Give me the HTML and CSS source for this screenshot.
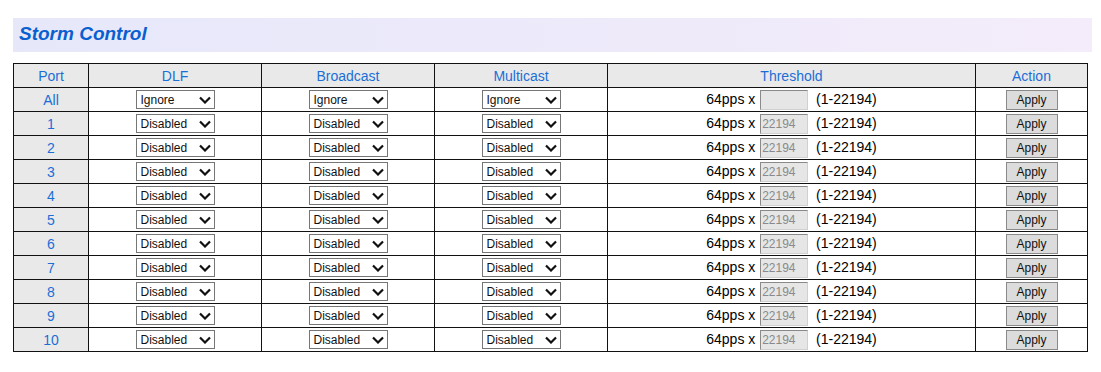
FILE: index.html
```html
<!DOCTYPE html>
<html>
<head>
  <title>Storm Control</title>
  <link rel="stylesheet" href="styles.css">
</head>
<body>
  <div class="page">
    <div class="title-bar">Storm Control</div>
    <table class="storm">
      <tr>
        <th class="col-port">Port</th>
        <th class="col-sel">DLF</th>
        <th class="col-sel">Broadcast</th>
        <th class="col-sel">Multicast</th>
        <th class="col-thr">Threshold</th>
        <th class="col-act">Action</th>
      </tr>
      <tr>
        <td class="port">All</td>
        <td><span class="sel"><select><option>Ignore</option></select><svg viewBox="0 0 12 8"><path d="M1 1.5 L6 6.5 L11 1.5" /></svg></span></td>
        <td><span class="sel"><select><option>Ignore</option></select><svg viewBox="0 0 12 8"><path d="M1 1.5 L6 6.5 L11 1.5" /></svg></span></td>
        <td><span class="sel"><select><option>Ignore</option></select><svg viewBox="0 0 12 8"><path d="M1 1.5 L6 6.5 L11 1.5" /></svg></span></td>
        <td>64pps x <input type="text" class="thr" value="" disabled> (1-22194)</td>
        <td><button class="apply">Apply</button></td>
      </tr>
      <tr>
        <td class="port">1</td>
        <td><span class="sel"><select><option>Disabled</option></select><svg viewBox="0 0 12 8"><path d="M1 1.5 L6 6.5 L11 1.5" /></svg></span></td>
        <td><span class="sel"><select><option>Disabled</option></select><svg viewBox="0 0 12 8"><path d="M1 1.5 L6 6.5 L11 1.5" /></svg></span></td>
        <td><span class="sel"><select><option>Disabled</option></select><svg viewBox="0 0 12 8"><path d="M1 1.5 L6 6.5 L11 1.5" /></svg></span></td>
        <td>64pps x <input type="text" class="thr" value="22194" disabled> (1-22194)</td>
        <td><button class="apply">Apply</button></td>
      </tr>
      <tr>
        <td class="port">2</td>
        <td><span class="sel"><select><option>Disabled</option></select><svg viewBox="0 0 12 8"><path d="M1 1.5 L6 6.5 L11 1.5" /></svg></span></td>
        <td><span class="sel"><select><option>Disabled</option></select><svg viewBox="0 0 12 8"><path d="M1 1.5 L6 6.5 L11 1.5" /></svg></span></td>
        <td><span class="sel"><select><option>Disabled</option></select><svg viewBox="0 0 12 8"><path d="M1 1.5 L6 6.5 L11 1.5" /></svg></span></td>
        <td>64pps x <input type="text" class="thr" value="22194" disabled> (1-22194)</td>
        <td><button class="apply">Apply</button></td>
      </tr>
      <tr>
        <td class="port">3</td>
        <td><span class="sel"><select><option>Disabled</option></select><svg viewBox="0 0 12 8"><path d="M1 1.5 L6 6.5 L11 1.5" /></svg></span></td>
        <td><span class="sel"><select><option>Disabled</option></select><svg viewBox="0 0 12 8"><path d="M1 1.5 L6 6.5 L11 1.5" /></svg></span></td>
        <td><span class="sel"><select><option>Disabled</option></select><svg viewBox="0 0 12 8"><path d="M1 1.5 L6 6.5 L11 1.5" /></svg></span></td>
        <td>64pps x <input type="text" class="thr" value="22194" disabled> (1-22194)</td>
        <td><button class="apply">Apply</button></td>
      </tr>
      <tr>
        <td class="port">4</td>
        <td><span class="sel"><select><option>Disabled</option></select><svg viewBox="0 0 12 8"><path d="M1 1.5 L6 6.5 L11 1.5" /></svg></span></td>
        <td><span class="sel"><select><option>Disabled</option></select><svg viewBox="0 0 12 8"><path d="M1 1.5 L6 6.5 L11 1.5" /></svg></span></td>
        <td><span class="sel"><select><option>Disabled</option></select><svg viewBox="0 0 12 8"><path d="M1 1.5 L6 6.5 L11 1.5" /></svg></span></td>
        <td>64pps x <input type="text" class="thr" value="22194" disabled> (1-22194)</td>
        <td><button class="apply">Apply</button></td>
      </tr>
      <tr>
        <td class="port">5</td>
        <td><span class="sel"><select><option>Disabled</option></select><svg viewBox="0 0 12 8"><path d="M1 1.5 L6 6.5 L11 1.5" /></svg></span></td>
        <td><span class="sel"><select><option>Disabled</option></select><svg viewBox="0 0 12 8"><path d="M1 1.5 L6 6.5 L11 1.5" /></svg></span></td>
        <td><span class="sel"><select><option>Disabled</option></select><svg viewBox="0 0 12 8"><path d="M1 1.5 L6 6.5 L11 1.5" /></svg></span></td>
        <td>64pps x <input type="text" class="thr" value="22194" disabled> (1-22194)</td>
        <td><button class="apply">Apply</button></td>
      </tr>
      <tr>
        <td class="port">6</td>
        <td><span class="sel"><select><option>Disabled</option></select><svg viewBox="0 0 12 8"><path d="M1 1.5 L6 6.5 L11 1.5" /></svg></span></td>
        <td><span class="sel"><select><option>Disabled</option></select><svg viewBox="0 0 12 8"><path d="M1 1.5 L6 6.5 L11 1.5" /></svg></span></td>
        <td><span class="sel"><select><option>Disabled</option></select><svg viewBox="0 0 12 8"><path d="M1 1.5 L6 6.5 L11 1.5" /></svg></span></td>
        <td>64pps x <input type="text" class="thr" value="22194" disabled> (1-22194)</td>
        <td><button class="apply">Apply</button></td>
      </tr>
      <tr>
        <td class="port">7</td>
        <td><span class="sel"><select><option>Disabled</option></select><svg viewBox="0 0 12 8"><path d="M1 1.5 L6 6.5 L11 1.5" /></svg></span></td>
        <td><span class="sel"><select><option>Disabled</option></select><svg viewBox="0 0 12 8"><path d="M1 1.5 L6 6.5 L11 1.5" /></svg></span></td>
        <td><span class="sel"><select><option>Disabled</option></select><svg viewBox="0 0 12 8"><path d="M1 1.5 L6 6.5 L11 1.5" /></svg></span></td>
        <td>64pps x <input type="text" class="thr" value="22194" disabled> (1-22194)</td>
        <td><button class="apply">Apply</button></td>
      </tr>
      <tr>
        <td class="port">8</td>
        <td><span class="sel"><select><option>Disabled</option></select><svg viewBox="0 0 12 8"><path d="M1 1.5 L6 6.5 L11 1.5" /></svg></span></td>
        <td><span class="sel"><select><option>Disabled</option></select><svg viewBox="0 0 12 8"><path d="M1 1.5 L6 6.5 L11 1.5" /></svg></span></td>
        <td><span class="sel"><select><option>Disabled</option></select><svg viewBox="0 0 12 8"><path d="M1 1.5 L6 6.5 L11 1.5" /></svg></span></td>
        <td>64pps x <input type="text" class="thr" value="22194" disabled> (1-22194)</td>
        <td><button class="apply">Apply</button></td>
      </tr>
      <tr>
        <td class="port">9</td>
        <td><span class="sel"><select><option>Disabled</option></select><svg viewBox="0 0 12 8"><path d="M1 1.5 L6 6.5 L11 1.5" /></svg></span></td>
        <td><span class="sel"><select><option>Disabled</option></select><svg viewBox="0 0 12 8"><path d="M1 1.5 L6 6.5 L11 1.5" /></svg></span></td>
        <td><span class="sel"><select><option>Disabled</option></select><svg viewBox="0 0 12 8"><path d="M1 1.5 L6 6.5 L11 1.5" /></svg></span></td>
        <td>64pps x <input type="text" class="thr" value="22194" disabled> (1-22194)</td>
        <td><button class="apply">Apply</button></td>
      </tr>
      <tr>
        <td class="port">10</td>
        <td><span class="sel"><select><option>Disabled</option></select><svg viewBox="0 0 12 8"><path d="M1 1.5 L6 6.5 L11 1.5" /></svg></span></td>
        <td><span class="sel"><select><option>Disabled</option></select><svg viewBox="0 0 12 8"><path d="M1 1.5 L6 6.5 L11 1.5" /></svg></span></td>
        <td><span class="sel"><select><option>Disabled</option></select><svg viewBox="0 0 12 8"><path d="M1 1.5 L6 6.5 L11 1.5" /></svg></span></td>
        <td>64pps x <input type="text" class="thr" value="22194" disabled> (1-22194)</td>
        <td><button class="apply">Apply</button></td>
      </tr>
    </table>
  </div>
</body>
</html>
```

FILE: styles.css
```css
body {
  margin: 0;
  font-family: "Liberation Sans", Arial, sans-serif;
  background: #fff;
}

.page {
  padding: 18px 9px 0 13px;
}

.title-bar {
  height: 34px;
  line-height: 32px;
  padding-left: 6px;
  background: linear-gradient(to right, #e6e8fa, #eeeafa 60%, #f4ecfa);
  color: #0a5fd0;
  font-size: 19px;
  font-weight: bold;
  font-style: italic;
  box-sizing: border-box;
}

.storm {
  margin-top: 11px;
  width: 1075px;
  border-collapse: collapse;
  table-layout: fixed;
}

.storm th,
.storm td {
  border: 1px solid #111;
  height: 23px;
  padding: 0;
  text-align: center;
  font-size: 14px;
  white-space: nowrap;
}

.storm th {
  background: #e9e9e9;
  color: #1a6fd6;
  font-weight: normal;
}

.storm td.port {
  background: #e9e9e9;
  color: #1a6fd6;
}

.col-port { width: 74px; }
.col-sel { width: 172px; }
.col-thr { width: 367px; }
.col-act { width: 111px; }

.sel {
  position: relative;
  display: inline-block;
  vertical-align: middle;
}

.sel select {
  -webkit-appearance: none;
  appearance: none;
  width: 79px;
  height: 19px;
  margin: 0;
  padding: 0 0 0 4px;
  border: 1px solid #767676;
  border-radius: 0;
  background: #fff;
  color: #111;
  font-family: "Liberation Sans", Arial, sans-serif;
  font-size: 12px;
  display: block;
}

.sel svg {
  position: absolute;
  right: 4px;
  top: 6px;
  width: 12px;
  height: 8px;
  pointer-events: none;
}

.sel svg path {
  fill: none;
  stroke: #111;
  stroke-width: 2.2;
}

.thr {
  width: 48px;
  height: 20px;
  box-sizing: border-box;
  margin: 0 4px 0 1px;
  padding: 0 0 0 1px;
  border: 1px solid #d0d0d0;
  border-top-color: #8a8a8a;
  border-left-color: #8a8a8a;
  background: #e6e6e6;
  color: #8a8a8a;
  font-family: "Liberation Sans", Arial, sans-serif;
  font-size: 12px;
  vertical-align: middle;
}

.apply {
  width: 52px;
  height: 20px;
  margin: 0;
  padding: 0;
  border: 1px solid #8a8a8a;
  border-radius: 0;
  background: #dcdcdc;
  color: #111;
  font-family: "Liberation Sans", Arial, sans-serif;
  font-size: 12px;
  vertical-align: middle;
  cursor: pointer;
}
```
